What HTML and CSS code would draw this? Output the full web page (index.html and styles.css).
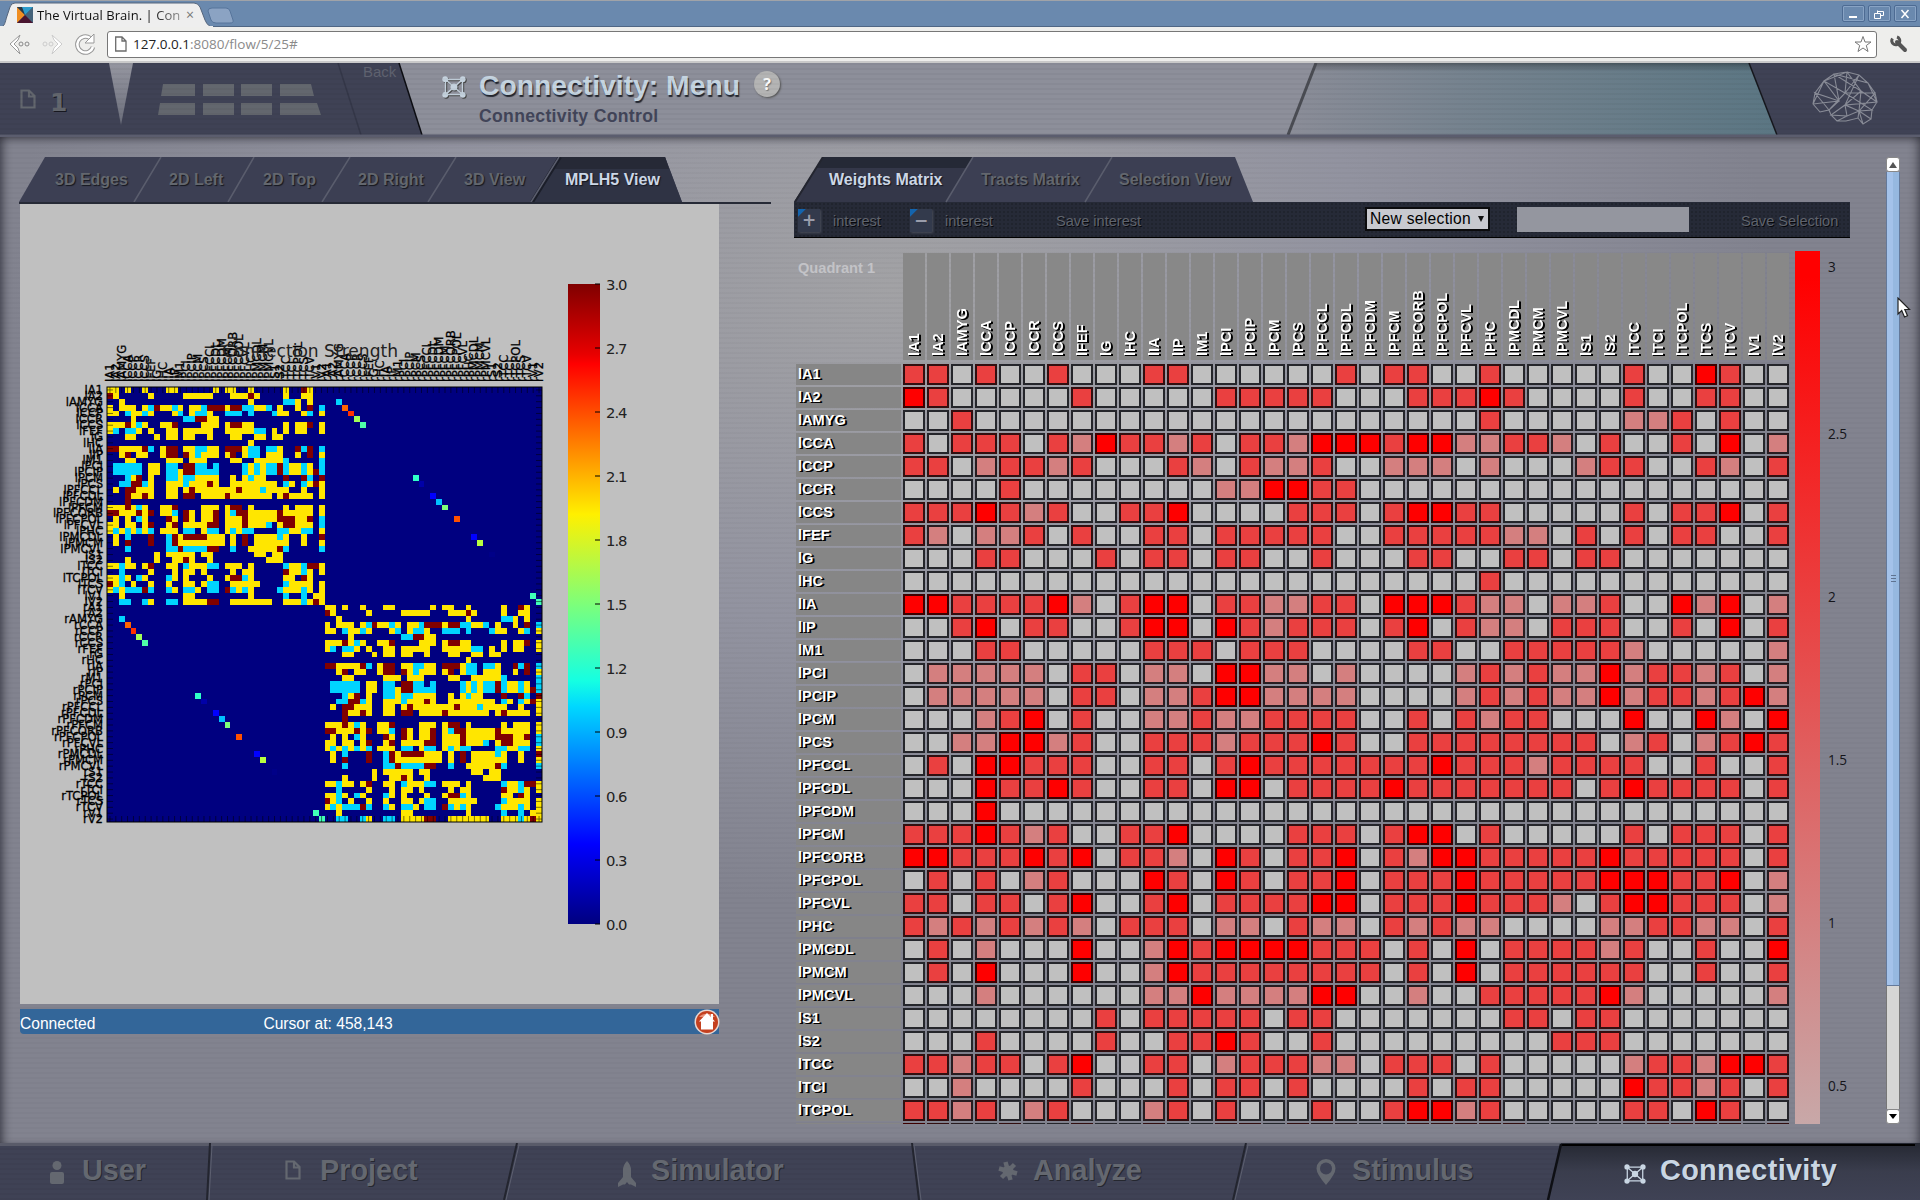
FILE: index.html
```html
<!DOCTYPE html>
<html lang="en">
<head>
<meta charset="utf-8">
<title>The Virtual Brain. | Connectivity</title>
<link rel="stylesheet" href="styles.css">
</head>
<body>
<svg class="defs" width="0" height="0">
  <defs>
    <symbol id="i-net" viewBox="0 0 24 22">
      <g fill="none" stroke="currentColor" stroke-width="1.4"><path d="M3.5 3.5H20.5V18.5H3.5ZM3.5 3.5L20.5 18.5M20.5 3.5L3.5 18.5"/></g>
      <g fill="currentColor"><circle cx="3.2" cy="3.2" r="2.9"/><circle cx="20.8" cy="3.2" r="2.9"/><circle cx="3.2" cy="18.8" r="2.9"/><circle cx="20.8" cy="18.8" r="2.9"/><circle cx="12" cy="11" r="3.5"/></g>
    </symbol>
    <symbol id="i-doc" viewBox="0 0 16 20"><path d="M1.5 1.5H9L14.5 7V18.5H1.5ZM9 1.5V7.5H14.5" fill="none" stroke="currentColor" stroke-width="2.2"/></symbol>
  </defs>
</svg>

<div class="titlebar">
  <svg class="art" width="240" height="27"><path d="M0 27C5 27 5 22 7 16L10 7Q11 3 15 3H194Q198 3 200 7L205 20Q208 27 213 27Z" fill="#eeeeee" stroke="#55657c"/><path d="M0 26H213V28H0Z" fill="#eeeeee"/><path d="M208 11Q208 8 212 8H226Q229 8 230 11L233 20Q234 23 230 23H216Q212 23 211 20Z" fill="#8ba3c3" stroke="#56749b"/></svg>
  <svg class="favicon" width="16" height="16"><path d="M0 0H16V16H0Z" fill="#45637a"/><path d="M0 0L8 8L0 16Z" fill="#ef8d22"/><path d="M0 0H16L8 8Z" fill="#2b3742"/><path d="M5 0H16L8 8Z" fill="#2e9ccb"/><path d="M0 16L8 8L16 16Z" fill="#4a1530"/></svg>
  <span class="tab-title">The Virtual Brain. | Con</span>
  <span class="tab-close">×</span>
  <div class="win-buttons">
    <i><svg width="20" height="16"><path d="M6 11H14" stroke="#fff" stroke-width="2"/></svg></i>
    <i><svg width="20" height="16"><path d="M8 5.500H14.500V9.500H12M5.500 7.500H11.500V12.500H5.500ZM8.500 7V4.500" stroke="#fff" fill="none"/></svg></i>
    <i><svg width="20" height="16"><path d="M6.500 4L13.500 12M13.500 4L6.500 12" stroke="#fff" stroke-width="1.500"/></svg></i>
  </div>
</div>
<div class="toolbar">
  <svg class="nav-icons" width="92" height="26" fill="none">
    <path d="M11 4L1 13L11 23L9 17L5 13L9 9Z" fill="#fff" stroke="#999"/><circle cx="12" cy="13" r="2" stroke="#888"/><circle cx="18" cy="13" r="2" stroke="#888"/>
    <path d="M43 4L53 13L43 23L45 17L49 13L45 9Z" fill="#fff" stroke="#ccc"/><circle cx="36" cy="13" r="2" stroke="#ccc"/><circle cx="42" cy="13" r="2" stroke="#ccc"/>
    <path d="M81 7A8 8 0 1 0 84 16" stroke="#999" stroke-width="4.500"/><path d="M81 7A8 8 0 1 0 84 16" stroke="#fff" stroke-width="2.500"/><path d="M85 3V12H76Z" fill="#fff" stroke="#999"/>
  </svg>
  <div class="omnibox">
    <svg width="12" height="16"><path d="M.7 1H7L11 5V15H.7ZM7 1V5H11" fill="none" stroke="#6b6b6b" stroke-width="1.300"/></svg>
    <span class="url"><b>127.0.0.1</b>:8080/flow/5/25#</span>
    <svg class="star" width="18" height="18"><path d="M9 1.500L11 7H17L12.300 10.500L14 16.500L9 13L4 16.500L5.700 10.500L1 7H7Z" fill="#fff" stroke="#777"/></svg>
  </div>
  <svg class="wrench" width="18" height="18"><path d="M7 7L15 15" stroke="#555" stroke-width="4" stroke-linecap="round"/><path d="M2.500 3.500A4 4 0 1 0 7 2" fill="none" stroke="#555" stroke-width="3"/></svg>
</div>

<header class="header">
  <svg class="art" width="1920" height="74">
    <defs><linearGradient id="teal"><stop offset="0" stop-color="#8b8d98"/><stop offset=".35" stop-color="#76838f"/><stop offset="1" stop-color="#5b7683"/></linearGradient>
    <linearGradient id="down" x2="0" y2="1"><stop offset="0" stop-color="#000" stop-opacity=".3"/><stop offset=".12" stop-color="#000" stop-opacity="0"/></linearGradient>
    <linearGradient id="wedge" x2="0" y2="1"><stop offset="0" stop-color="#9596a0"/><stop offset="1" stop-color="#6b6e7b"/></linearGradient></defs>
    <path d="M0 0H399L422 72H0Z" fill="#3f4255"/><path d="M399 0L422 72" stroke="#0c0d12" stroke-width="1.500"/>
    <path d="M338 0L361 72" stroke="#343748" stroke-width="1.500"/>
    <path d="M109 0H133L121 62Z" fill="url(#wedge)"/>
    <path d="M1316 0H1749L1777 72H1288Z" fill="url(#teal)"/><path d="M1316 0H1749L1777 72H1288Z" fill="url(#down)"/>
    <path d="M1316 0L1288 72" stroke="#4a4c53" stroke-width="3"/>
    <path d="M1749 0H1920V72H1777Z" fill="#3f4255"/><path d="M1749 0L1777 72" stroke="#16171d" stroke-width="1.500"/>
    <g fill="#63676e"><path d="M163 21H195V33H161ZM203 21H234V33H203ZM241 21H272V33H241ZM280 21H311L314 33H280ZM160 40H195V52H158ZM203 40H234V52H203ZM241 40H272V52H241ZM280 40H317L321 52H280Z"/></g>
    <path d="M0 71.500H1920V74H0Z" fill="#5b5d6e"/>
  </svg>
  <svg class="h-doc" width="16" height="20"><use href="#i-doc"/></svg>
  <span class="h-num">1</span>
  <span class="h-back">Back</span>
  <svg class="h-net" width="24" height="22"><use href="#i-net"/></svg>
  <div class="h-titles"><h1>Connectivity: Menu<span class="help">?</span></h1><h2>Connectivity Control</h2></div>
  <svg class="brain" width="68" height="54" fill="none" stroke="#8a8d98" stroke-width="1.100"><path d="M2 33L4 22L13 10L23 3L36 1L48 4L57 12L64 22L66 31L61 39L60 48L52 53L47 47L35 50L26 50L20 44L18 39L9 41L2 33L13 10L34 22L48 4L34 34L66 31L57 12L23 3L28 30L4 22L18 39L34 22L64 22L48 40L34 34L20 44L36 45L48 40L61 39L34 22L36 1L13 10L28 30L18 39M28 30L2 33M36 1L50 20L66 31M50 20L48 40L52 53L60 48L48 40L47 47M23 3L50 20L34 34L36 45L26 50"/></svg>
</header>

<main class="main">
  <section class="left">
    <nav class="tabs">
      <svg class="art" width="752" height="47"><path d="M26 0H646L663 45H0Z" fill="#3c3f53"/><path d="M541 0H646L663 45H513Z" fill="#2f3344"/><path d="M541 0H646L650 12H536Z" fill="#262936"/><path d="M541 0L513 45" stroke="#1b1e29" stroke-width="4"/><g stroke="#5a5d6d" stroke-width="1.500"><path d="M142 0L115 45M235 0L209 45M331 0L303 45M437 0L409 45M540 0L512 45"/></g><path d="M0 45H752V47H0Z" fill="#262a36"/></svg>
      <a>3D Edges</a><a>2D Left</a><a>2D Top</a><a>2D Right</a><a>3D View</a><a class="on">MPLH5 View</a>
    </nav>
    <div class="canvas"><svg id="plot" width="700" height="801"></svg></div>
    <div class="status"><span>Connected</span><span class="cur">Cursor at: 458,143</span>
      <svg width="26" height="26" class="home"><circle cx="13" cy="13" r="12.500" fill="#e8d8d2"/><circle cx="13" cy="13" r="11" fill="#c4401f"/><path d="M5 8A11 10 0 0 1 21 8Z" fill="#e9927a"/><path d="M13 4L21 12.500H19V20.500H7V12.500H5Z" fill="#fff"/><path d="M17 5H19V10H17Z" fill="#fff"/></svg></div>
  </section>

  <section class="right">
    <nav class="tabs">
      <svg class="art" width="1056" height="47"><path d="M29 0H441L459 45H0Z" fill="#3c3f53"/><path d="M29 0H179L152 45H0Z" fill="#343749"/><path d="M29 0H179L173 11H22Z" fill="#252936"/><path d="M29 0L1 45" stroke="#23252f" stroke-width="2"/><g stroke="#5a5d6d" stroke-width="1.500"><path d="M179 0L152 45M318 0L291 45"/></g></svg>
      <a class="on">Weights Matrix</a><a>Tracts Matrix</a><a>Selection View</a>
    </nav>
    <div class="actions">
      <i class="sq">+</i><span class="a1">interest</span><i class="sq">−</i><span class="a2">interest</span><span class="a3">Save interest</span>
      <div class="select">New selection<em></em></div><div class="input"></div><span>Save Selection</span>
    </div>
    <div class="matrix-area">
      <div class="matrix" id="matrix"></div>
      <div class="legend"></div>
      <div class="ticks"><span>3</span><span>2.5</span><span>2</span><span>1.5</span><span>1</span><span>0.5</span></div>
    </div>
  </section>
  <div class="scroll"><div class="btn"><b class="up"></b></div><div class="thumb"><u></u></div><div class="track"></div><div class="btn"><b class="dn"></b></div></div>
  <svg class="cursor" width="14" height="22"><path d="M1 1V17L4.700 13.500L7.500 20L10.500 18.700L7.800 12.500H12.500Z" fill="#fff" stroke="#222" stroke-width="1.200"/></svg>
</main>

<footer class="footer">
  <svg class="art" width="1920" height="57">
    <defs><linearGradient id="act" x2="0" y2="1"><stop offset="0" stop-color="#252832"/><stop offset=".5" stop-color="#3a3d4d"/><stop offset="1" stop-color="#3f4255"/></linearGradient></defs>
    <path d="M0 0H1920V3H0Z" fill="#595b69"/>
    <path d="M1561 0H1920V57H1548Z" fill="url(#act)"/><path d="M1562 1H1915V3H1561Z" fill="#000"/><path d="M1561 1L1548 57" stroke="#0e0f14" stroke-width="2.500"/>
    <g stroke="#23252f" stroke-width="2"><path d="M210 0L207 57M517 0L504 57M912 0L919 57M1246 0L1233 57"/></g>
    <g stroke="#5d6070"><path d="M212 2L209 57M519 2L506 57M914 2L921 57M1248 2L1235 57"/></g>
  </svg>
  <a><svg width="14" height="23"><circle cx="7" cy="4.500" r="4.500" fill="currentColor"/><rect y="11" width="14" height="12" rx="2" fill="currentColor"/></svg>User</a>
  <a><svg width="16" height="20"><use href="#i-doc"/></svg>Project</a>
  <a><svg width="18" height="26"><path d="M9 0Q13 4 13 9V16L18 22V26L13 23.500H11L9 21L7 23.500H5L0 26V22L5 16V9Q5 4 9 0Z" fill="currentColor"/></svg>Simulator</a>
  <a><svg width="20" height="20"><g stroke="currentColor" stroke-width="4.500"><path d="M7.500 1L12.500 19M1 7.500L19 12.500M16.500 3.500L3.500 16.500"/></g><circle cx="10" cy="10" r="5.500" fill="currentColor"/></svg>Analyze</a>
  <a><svg width="20" height="26"><path d="M10 0A9.500 9.500 0 0 1 19.500 9.500Q19.500 15 10 26Q.5 15 .5 9.500A9.500 9.500 0 0 1 10 0Z" fill="currentColor"/><circle cx="10" cy="9.500" r="6" fill="#3f4255"/></svg>Stimulus</a>
  <a class="on"><svg width="24" height="20" viewBox="0 0 24 22"><use href="#i-net"/></svg>Connectivity</a>
</footer>
<script src="script.js"></script>
</body>
</html>
```
FILE: styles.css
```css
* { box-sizing: border-box; }
body { margin: 0; width: 1920px; height: 1200px; overflow: hidden; font-family: "Liberation Sans", Arial, sans-serif; display: flex; flex-direction: column; background: #82838f; }
.defs, .art { position: absolute; left: 0; top: 0; }
svg { flex: none; display: block; }

.titlebar { position: relative; height: 27px; background: #6a89ae; border-top: 1px solid #a0a3a8; border-bottom: 1px solid #4f6684; display: flex; align-items: center; padding: 2px 3px 0 17px; font: 13px "Open Sans", sans-serif; color: #111; }
.titlebar > * { position: relative; }
.titlebar > .art { position: absolute; top: -1px; }
.tab-title { margin-left: 4px; width: 144px; white-space: nowrap; letter-spacing: .05px; -webkit-mask-image: linear-gradient(90deg, #000 80%, rgba(0,0,0,.4)); }
.tab-close { margin-left: 5px; color: #777; font-size: 14px; }
.win-buttons { margin-left: auto; display: flex; gap: 3px; padding-bottom: 2px; }
.win-buttons i { width: 23px; height: 17px; border: 1px solid #4d6b93; border-radius: 2px; box-shadow: inset 0 0 0 1px #88a3c4; }
.toolbar { height: 36px; background: #eeeeec; border-bottom: 2px solid #c9c9c9; display: flex; align-items: center; padding-left: 9px; }
.nav-icons { margin-right: 6px; }
.omnibox { width: 1770px; height: 27px; background: #fff; border: 1px solid #777; border-radius: 3px; display: flex; align-items: center; padding: 0 4px 0 7px; font: 13.5px "Open Sans", sans-serif; color: #8a8a8a; }
.omnibox svg { margin-right: 6px; }
.url b { font-weight: 400; color: #222; }
.omnibox .star { margin: 0 0 0 auto; }
.wrench { margin-left: 13px; }

.header { position: relative; height: 74px; background: #8d8f9a; display: flex; align-items: flex-start; }
.header::after { content: ""; position: absolute; inset: 0; background: repeating-linear-gradient(rgba(0,0,0,.035) 0 2px, transparent 2px 5px); }
.header > * { position: relative; }
.header > .art { position: absolute; }
.h-doc { margin: 26px 0 0 20px; color: #63676e; }
.h-num { margin: 24px 0 0 14px; width: 20px; font: bold 25px/32px "DejaVu Sans", sans-serif; color: #63676e; text-shadow: 1px 1px 0 #16171f; }
.h-back { margin: 0 0 0 293px; width: 40px; font-size: 15px; line-height: 18px; color: #5f6270; }
.h-net { margin: 13px 0 0 39px; color: #c5d2de; filter: drop-shadow(1px 1px 0 #444); }
.h-titles { margin-left: 13px; flex: 1; }
.h-titles h1 { margin: 6px 0 0; font-size: 28.3px; line-height: 32px; color: #c5d4e0; text-shadow: 1px 2px 1px #22252e; display: flex; align-items: center; }
.help { width: 26px; height: 26px; margin: -2px 0 0 14px; border-radius: 50%; background: #b4b4b4; color: #fff; font: bold 16px/26px "Open Sans", sans-serif; text-align: center; text-shadow: 1px 1px 1px #777; box-shadow: 1px 1px 2px #555; }
.h-titles h2 { margin: 6px 0 0; font-size: 17.6px; line-height: 19px; letter-spacing: .32px; color: #424559; }
.brain { margin: 8px 41px 0 0; }

.main { position: relative; height: 1006px; display: flex; padding: 20px 0 0 19px;
  background: repeating-linear-gradient(rgba(0,0,0,.025) 0 2px, transparent 2px 5px), radial-gradient(ellipse 880px 620px at 890px 150px, #a2a2a5, #9293a0 55%, #82838f);
  box-shadow: inset 0 7px 7px -4px rgba(30,30,40,.45), inset 8px 0 9px -5px rgba(30,30,40,.6), inset -8px 0 9px -5px rgba(30,30,40,.5); }
.left { width: 752px; margin-right: 23px; }
.right { width: 1056px; }
.tabs { position: relative; height: 45px; padding-left: 35px; display: flex; }
.left .tabs { padding-left: 36px; }
.tabs a { position: relative; font-weight: bold; font-size: 16px; line-height: 45px; color: #63676e; text-shadow: 1px 1px 1px #15171f; white-space: nowrap; }
.tabs a.on { color: #ccd7e6; }
.left a:nth-of-type(1) { width: 114px; }
.left a:nth-of-type(2) { width: 94px; }
.left a:nth-of-type(3) { width: 95px; }
.left a:nth-of-type(4) { width: 106px; }
.left a:nth-of-type(5) { width: 101px; }
.right a:nth-of-type(1) { width: 152px; }
.right a:nth-of-type(2) { width: 138px; }
.canvas { margin: 2px 0 0 1px; width: 699px; height: 800px; background: #c0c0c0; overflow: hidden; }
#plot text { font-family: "DejaVu Sans", sans-serif; }
#plot .name { font-size: 11.6px; fill: #000; stroke: #000; stroke-width: .3px; }
.status { margin: 5px 0 0 1px; width: 699px; height: 25px; background: #336699; color: #fff; font-size: 15.6px; line-height: 29px; display: flex; border-bottom-left-radius: 4px; }
.cur { margin-left: 168px; }
.home { margin: 0 -1px 0 auto; }

.actions { height: 36px; background: #262a37; background-image: radial-gradient(#20242e 1px, transparent 1px); background-size: 4px 4px; border-bottom: 1px solid #000; display: flex; align-items: center; padding-left: 4px; font-size: 14.6px; color: #5f636d; text-shadow: 1px 1px 0 #07080c; white-space: nowrap; }
.actions span { padding-top: 2px; }
.sq { position: relative; width: 22px; height: 23px; margin-top: 2px; background: linear-gradient(135deg, #1464ad 5px, #333a4c 6px); box-shadow: 1px 1px 2px #4a4e5c; color: #9a9dab; font: bold 17px/22px "DejaVu Sans", sans-serif; text-align: center; text-shadow: none; }
.a1 { margin-left: 13px; width: 77px; }
.a2 { margin-left: 13px; width: 111px; }
.a3 { width: 309px; }
.select { width: 125px; height: 24px; margin-top: -2px; background: #c8c9cf; border: 2px solid #0b0b0d; font-size: 15.6px; line-height: 20px; color: #000; text-shadow: none; padding-left: 3px; letter-spacing: .3px; display: flex; align-items: center; gap: 7px; }
.select em { border: 3.5px solid transparent; border-top: 6px solid #111; border-bottom: 0; }
.input { width: 172px; height: 25px; margin: 0 52px 0 27px; background: #94969f; }

.matrix-area { display: flex; padding: 13px 0 0 2px; }
.matrix { margin-top: 2px; width: 999px; height: 871px; overflow: hidden; display: grid; grid-template-columns: 105px repeat(37, 22px); grid-template-rows: 109px; grid-auto-rows: 21px; column-gap: 2px; row-gap: 2px; font-weight: bold; font-size: 14.6px; color: #fff; text-shadow: 1px 1px 0 #000, 2px 1px 0 #000; }
.quad { color: #c3c3c7; text-shadow: none; padding: 7px 0 0 2px; }
.col { height: 107px; background: #888; writing-mode: vertical-rl; transform: rotate(180deg); line-height: 22px; padding-top: 4px; white-space: nowrap; text-shadow: -1px 1px 0 #000, -1px 2px 0 #000; }
.rowname { background: #868686; line-height: 21px; padding-left: 2px; }
.cell { border: 2px solid #25262b; }
.v0 { background: #c0c0c0; }
.v1 { background: #d47f7f; border-color: #281c20; }
.v2 { background: #ea4040; border-color: #320f10; }
.v3 { background: #ff0000; border-color: #3d0000; }
.legend { width: 25px; height: 873px; background: linear-gradient(#f00 3%, #c8a8a8); }
.ticks { margin-left: 8px; padding-top: 6px; font: 13.6px/20px "Open Sans", sans-serif; color: #15151a; }
.ticks span { display: block; height: 163px; }
.ticks span:first-child { height: 167px; }

.scroll { width: 14px; height: 967px; margin-left: 36px; display: flex; flex-direction: column; }
.btn { height: 15px; background: #fff; border: 1px solid #888; border-radius: 3px; display: flex; align-items: center; justify-content: center; }
.up { border: 4px solid transparent; border-top: 0; border-bottom: 6px solid #555; }
.dn { border: 4px solid transparent; border-bottom: 0; border-top: 5px solid #000; }
.thumb { height: 814px; border: 1px solid #64799a; border-width: 0 1px 1px; background: linear-gradient(90deg, #a4c2ea 50%, #96b8e0 50%); display: flex; align-items: center; justify-content: center; }
.thumb u { width: 5px; height: 8px; background: repeating-linear-gradient(#5f7391 0 1px, transparent 1px 3px); }
.track { flex: 1; background: #d6d6d5; border: solid #777; border-width: 0 1px; }
.cursor { position: absolute; left: 1897px; top: 160px; }

.footer { position: relative; height: 57px; background: repeating-linear-gradient(rgba(0,0,0,.04) 0 2px, transparent 2px 5px), #3f4255; display: flex; padding-left: 50px; font-weight: bold; font-size: 28.8px; line-height: 54px; color: #646870; text-shadow: 1px 1px 0 #25272f; }
.footer a { position: relative; display: flex; white-space: nowrap; }
.footer a svg { margin: 18px 18px 0 0; }
.footer a:nth-of-type(1) { width: 235px; }
.footer a:nth-of-type(2) { width: 333px; }
.footer a:nth-of-type(2) svg { margin: 17px 19px 0 0; }
.footer a:nth-of-type(3) { width: 380px; }
.footer a:nth-of-type(3) svg { margin-right: 15px; }
.footer a:nth-of-type(4) { width: 318px; }
.footer a:nth-of-type(4) svg { margin-right: 15px; }
.footer a:nth-of-type(5) { width: 307px; }
.footer a:nth-of-type(5) svg { margin: 16px 16px 0 0; }
.footer a.on { color: #c9d6e3; letter-spacing: .35px; }
.footer a.on svg { margin: 21px 13px 0 0; }
```
FILE: script.js
```js
const names = "A1 A2 AMYG CCA CCP CCR CCS FEF G HC IA IP M1 PCI PCIP PCM PCS PFCCL PFCDL PFCDM PFCM PFCORB PFCPOL PFCVL PHC PMCDL PMCM PMCVL S1 S2 TCC TCI TCPOL TCS TCV V1 V2".split(" ");
// Connection weights inside one hemisphere, one digit per target region.
const weights = [
"220200200022000000"+"2022002000002003200",
"320000020000022222"+"0002223200002002200",
"002000000000000000"+"0000002000001120200",
"202220213221202213"+"3323311221020020301",
"220122120002102112"+"0011101000122002102",
"000020000000011332"+"2000000000000000000",
"222321200223000022"+"2023322000002022302",
"210112020022022222"+"0022222110202022002",
"000220002022022002"+"0002200220220000000",
"000000000000000000"+"0000002000000000000",
"332222310233022112"+"2033321101120031301",
"002302200233032122"+"2023021102220020302",
"000220000022202220"+"0002200222221000001",
"011111022011033110"+"1000012121131221201",
"011111022011233111"+"1000012121131221231",
"000123020011211222"+"2002021220003003103",
"001133120022212223"+"2002222222201201232",
"020332220022023222"+"2222322212222002002",
"000322320022033022"+"2232222222023222202",
"000300000000000000"+"0000000000000000000",
"222321200223000022"+"2023302000002022202",
"332223230221032022"+"3021332222232222202",
"020201200032032022"+"3022232222233322301",
"220220230023022223"+"3022232221023322201",
"212121210222011021"+"1021211000011221102",
"020100030013233332"+"2202030222212002003",
"020300030013222222"+"2202030222222002002",
"000100000011311113"+"3001002222231000001",
"000000002022222022"+"0000000220220000000",
"000200002002232002"+"0000000002220000000",
"221220230022012221"+"1022202000001221332",
"001000020002022020"+"0002022000003221202",
"221201200012020002"+"0023312000002203200",
"321020020020022021"+"1002222200001222202",
"212111310012011201"+"1031212000012221202",
"002000000000022000"+"0000002000001001022",
"001100120011022223"+"3002222222002221232"
];

const grid = document.getElementById("matrix");
const add = (cls, text = "") => {
  const d = document.createElement("div");
  d.className = cls;
  d.textContent = text;
  grid.appendChild(d);
};
add("quad", "Quadrant 1");
names.forEach(n => add("col", "l" + n));
for (let r = 0; r < 34; r++) {
  add("rowname", r < 33 ? "l" + names[r] : "");
  for (const v of weights[r]) add("cell v" + v);
}

// Heat map of the full matrix, both hemispheres.
const X = 87, Y = 183, S = 435 / 74;
const jet = ["#000080", "#00d4ff", "#ffe600", "#800000"];
const links = {2:"#00d4ff",3:"#ff6400",4:"#ff3000",5:"#a0ff58",6:"#50ffa8",15:"#30ffc8",16:"#0000a8",18:"#0000ff",19:"#00c0ff",20:"#7dff7a",22:"#ff5000",25:"#0000ff",26:"#b8ff40",28:"#000088",35:"#40ffb8",36:"#40ffb8"};
let s = `<defs><linearGradient id="jet" x2="0" y2="1"><stop offset="0" stop-color="#800000"/><stop offset=".11" stop-color="#e80000"/><stop offset=".125" stop-color="#f00"/><stop offset=".36" stop-color="#fff000"/><stop offset=".5" stop-color="#7dff7a"/><stop offset=".62" stop-color="#15ffe2"/><stop offset=".66" stop-color="#00d8ff"/><stop offset=".875" stop-color="#00f"/><stop offset="1" stop-color="#000080"/></linearGradient></defs>
<rect x="${X}" y="${Y}" width="435" height="435" fill="#000080"/><g shape-rendering="crispEdges">`;
const box = (c, r, f) => { s += `<rect x="${X + c * S}" y="${Y + r * S}" width="${S}" height="${S}" fill="${f}"/>`; };
for (const o of [0, 37])
  weights.forEach((row, r) => [...row].forEach((v, c) => { if (+v) box(c + o, r + o, jet[v]); }));
for (const k in links) { box(+k + 37, +k, links[k]); box(+k, +k + 37, links[k]); }
s += "</g>";
for (let i = 0; i < 74; i++) {
  const p = (i + .5) * S, n = (i < 37 ? "l" : "r") + names[i % 37];
  s += `<path d="M${X + p} ${Y}v6M${X + p} ${Y + 435}v-6M${X} ${Y + p}h6M${X + 435} ${Y + p}h-6" stroke="#000" stroke-width=".8" opacity=".65"/>`;
  s += `<text class="name" x="${X - 4}" y="${Y + p + 4}" text-anchor="end">${n}</text>`;
  s += `<text class="name" transform="translate(${X + p + 4} ${Y - 5}) rotate(-90)">${n}</text>`;
}
s += `<rect x="${X}" y="${Y}" width="435" height="435" fill="none" stroke="#000"/>`;
s += `<text x="202" y="153" font-size="17.500" textLength="176" lengthAdjust="spacingAndGlyphs" fill="#222">Connection Strength</text>`;
s += `<rect x="548" y="80" width="32" height="640" fill="url(#jet)"/>`;
for (let i = 0; i <= 10; i++) {
  const y = 80 + i * 64;
  s += `<path d="M575 ${y}h5" stroke="#000"/><text x="586" y="${y + 6}" font-size="14.800" textLength="21.500" fill="#222">${(3 - i * .3).toFixed(1)}</text>`;
}
document.getElementById("plot").innerHTML = s;
```
